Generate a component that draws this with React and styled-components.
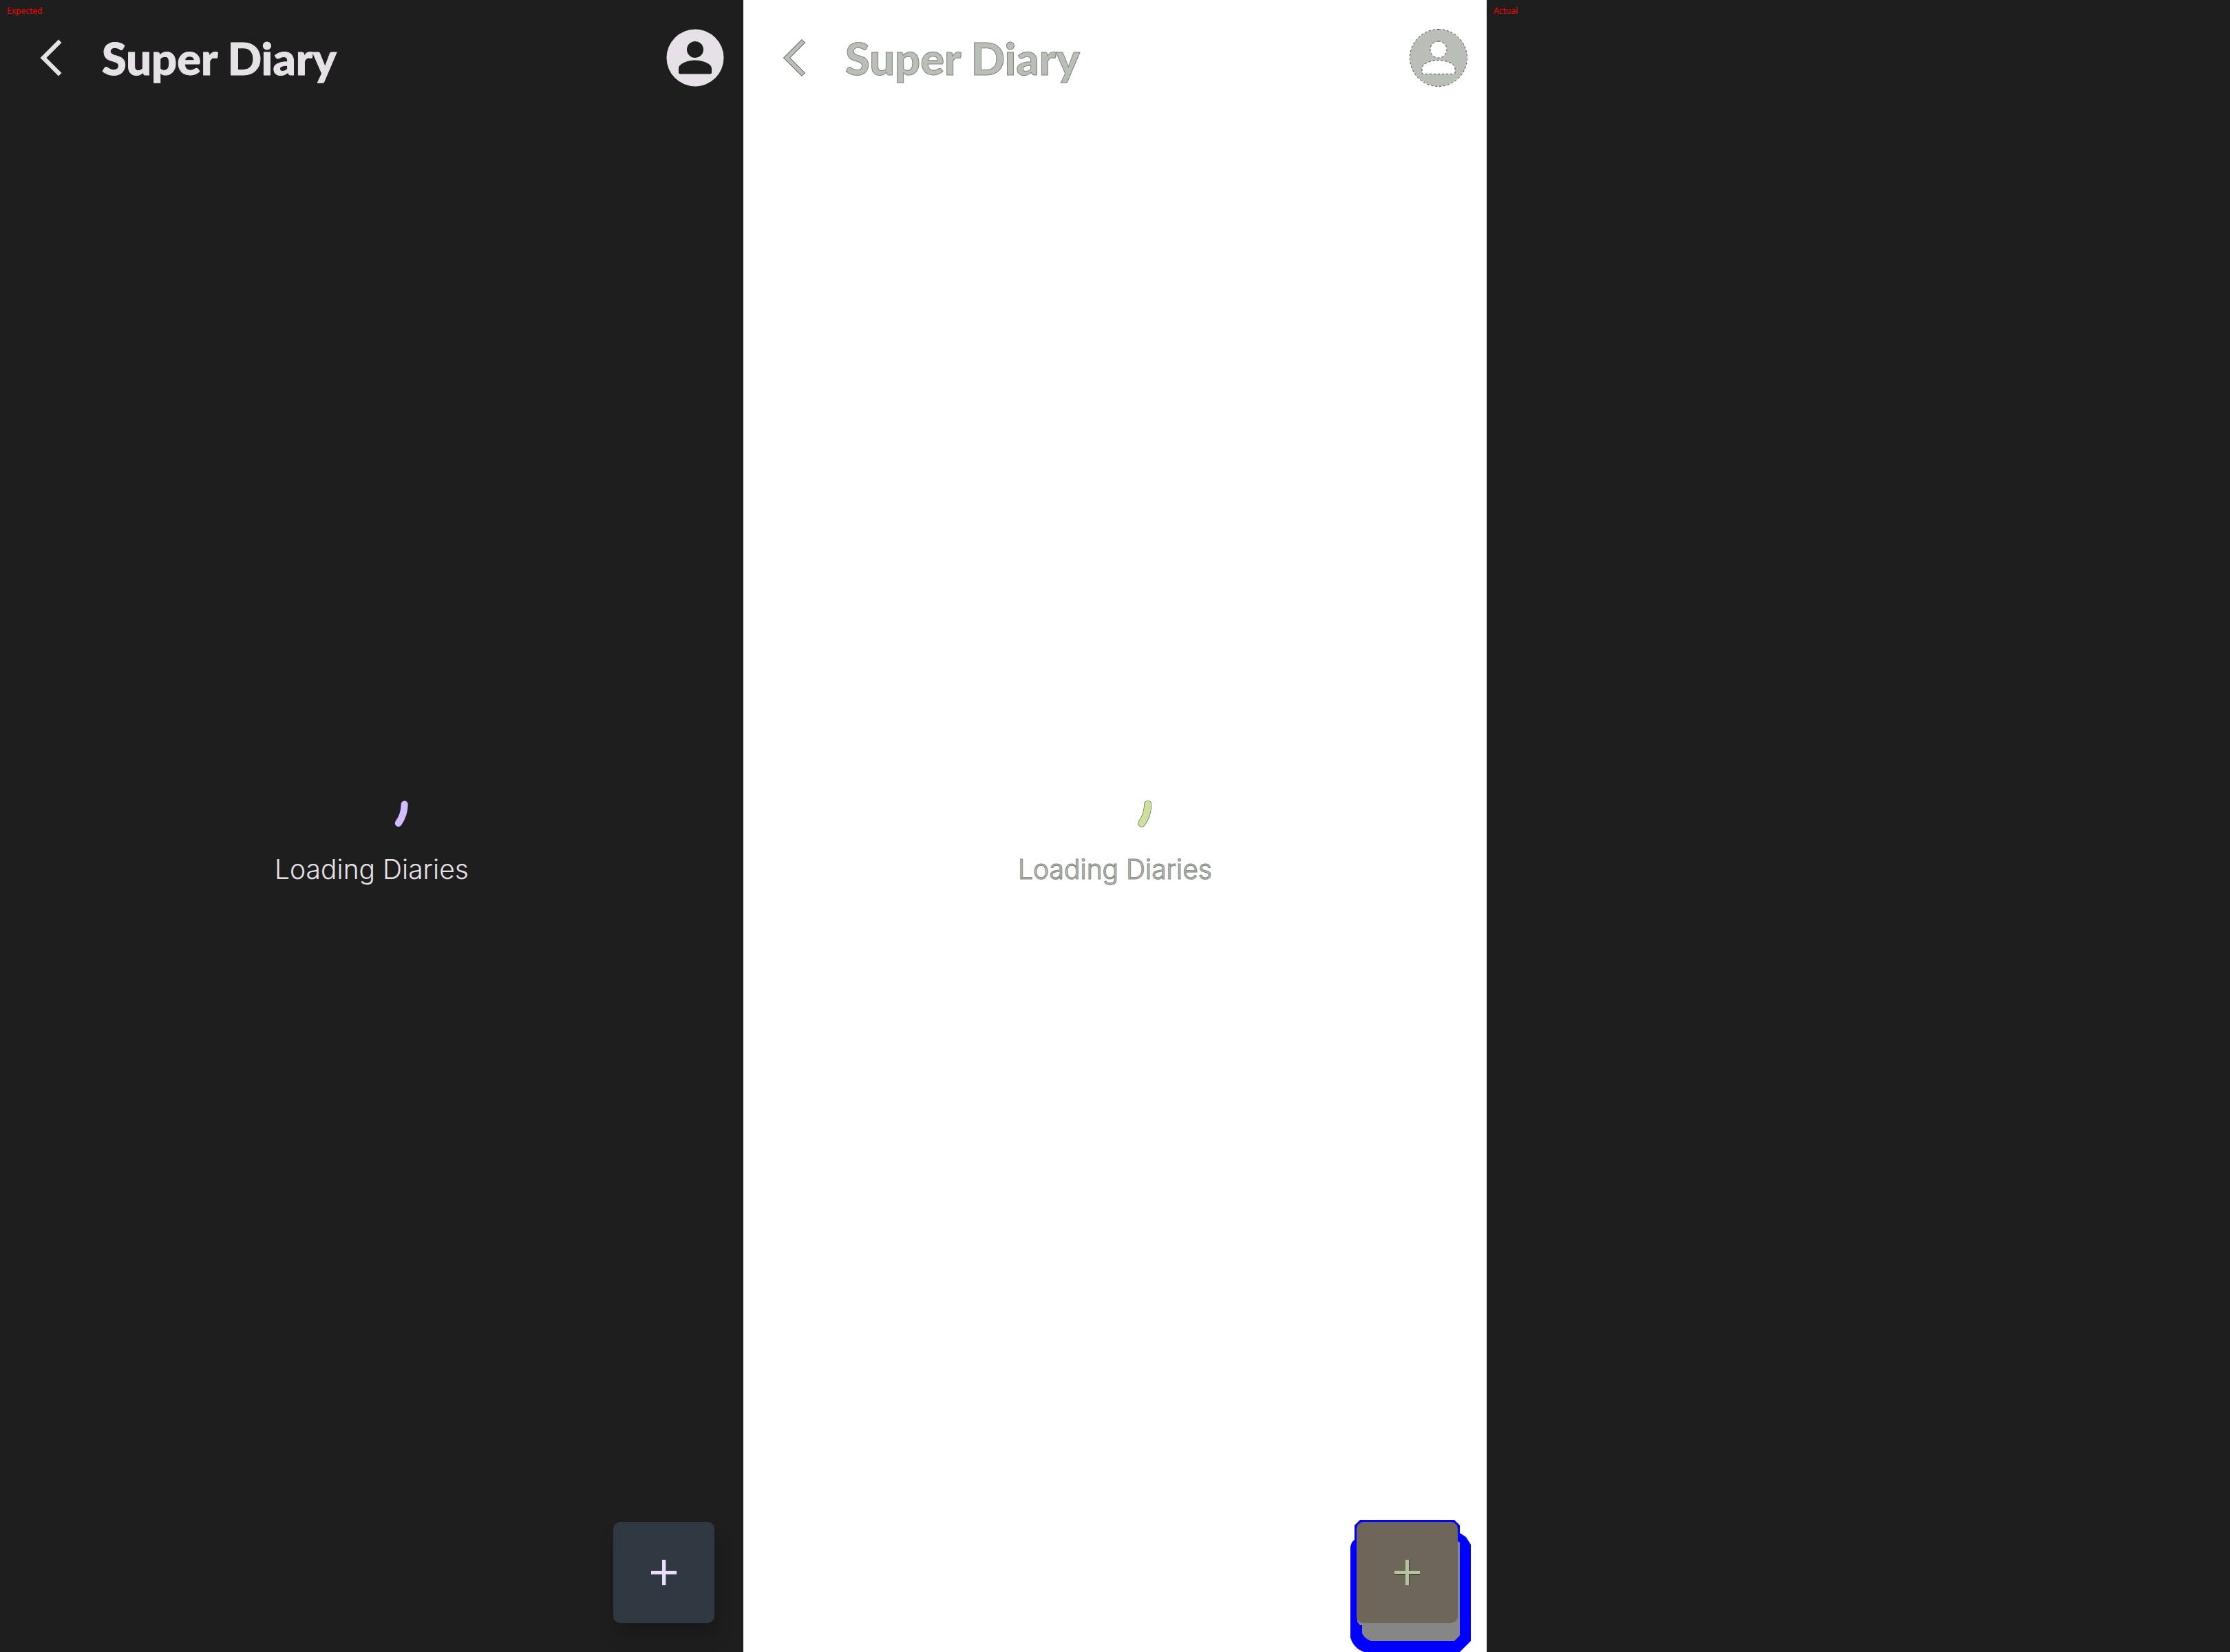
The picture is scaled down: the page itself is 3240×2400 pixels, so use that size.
import React from "react";
import styled, { createGlobalStyle } from "styled-components";

const GlobalStyle = createGlobalStyle`
  *, *::before, *::after { box-sizing: border-box; }
  body { margin: 0; background: #1e1e1e; }
`;

const themes = {
  dark: {
    background: "#1e1e1e",
    text: "#e6e1e7",
    titleEdge: "#e6e1e7",
    textEdge: "transparent",
    edge: "transparent",
    accent: "#d0bcff",
    fab: "#303841",
    plus: "#eaddff",
    plusEdge: "#6d6a7b",
    shadow: "4px 18px 24px rgba(0, 0, 0, 0.2)",
  },
  diff: {
    background: "#ffffff",
    text: "#b9beb6",
    titleEdge: "#80847e",
    textEdge: "#80847e",
    edge: "#3c3e3b",
    accent: "#cfe09c",
    fab: "#6f665a",
    plus: "#b4c3a0",
    plusEdge: "#3c3a28",
    shadow: "none",
  },
};

const Comparison = styled.main`
  display: grid;
  grid-template-columns: repeat(3, minmax(0, 1fr));
  min-height: 100vh;
`;

const Panel = styled.section`
  position: relative;
  display: grid;
  grid-template-rows: 189px 1fr 189px;
  overflow: hidden;
  background: ${(p) => p.$theme.background};
  color: ${(p) => p.$theme.text};
`;

const Tag = styled.span`
  position: absolute;
  top: 8px;
  left: 10px;
  color: #ff0000;
  font: 400 12px/16px "Noto Sans", sans-serif;
`;

const AppBar = styled.header`
  display: flex;
  align-items: center;
  gap: 28px;
  height: 168px;
  padding: 0 28px;
`;

const IconButton = styled.button`
  display: flex;
  align-items: center;
  justify-content: center;
  width: ${(p) => p.$width}px;
  height: 84px;
  padding: 0;
  border: 0;
  background: none;
  color: inherit;

  svg { display: block; }
`;

const Title = styled.h1`
  flex: 1;
  margin: 0;
  font: 900 65px/80px Lato, sans-serif;
  white-space: nowrap;
  -webkit-text-stroke: 1px ${(p) => p.$edge};
`;

const Loading = styled.div`
  display: flex;
  flex-direction: column;
  align-items: center;
  justify-content: center;
  gap: 20px;

  svg { display: block; }
`;

const Message = styled.p`
  margin: 0;
  font: 300 39px/44px Inter, sans-serif;
  -webkit-text-stroke: 1px ${(p) => p.$edge};
`;

const Actions = styled.footer`
  display: flex;
  justify-content: flex-end;
  align-items: flex-end;
  padding: 0 42px 42px;
`;

const FabSlot = styled.div`
  position: relative;
`;

const ShadowMap = styled.svg`
  position: absolute;
  top: -3px;
  left: -9px;
`;

const Fab = styled.button`
  position: relative;
  display: flex;
  align-items: center;
  justify-content: center;
  width: 147px;
  height: 147px;
  padding: 0;
  border: 0;
  border-radius: 10px;
  background: ${(p) => p.$theme.fab};
  box-shadow: ${(p) => p.$theme.shadow};
`;

function Screen({ theme, label, tag, showShadowMap }) {
  const outline = theme.edge;
  return (
    <Panel $theme={theme} aria-label={label}>
      {tag && <Tag>{tag}</Tag>}
      <AppBar>
        <IconButton type="button" $width={92} aria-label="Back">
          <svg width="32" height="54" viewBox="0 0 32 54" fill="currentColor" stroke={outline}>
            <path d="M27 .5 31.5 5 9.5 27l22 22-4.500 4.500L.5 27Z" />
          </svg>
        </IconButton>
        <Title $edge={theme.titleEdge}>Super Diary</Title>
        <IconButton type="button" $width={84} aria-label="Account">
          <svg width="84" height="84" viewBox="0 0 84 84">
            <path
              fill="currentColor"
              stroke={outline}
              strokeDasharray="3 3"
              fillRule="evenodd"
              d="M42 .5a41.500 41.500 0 1 1 0 83a41.500 41.500 0 1 1 0-83ZM42 18a12 12 0 1 0 0 24a12 12 0 1 0 0-24ZM18 63.500Q18 65.500 20 65.500H64Q66 65.500 66 63.500V57.500C66 50 52 45.500 42 45.500S18 50 18 57.500Z"
            />
          </svg>
        </IconButton>
      </AppBar>
      <Loading role="status">
        <svg width="105" height="105" viewBox="0 0 105 105" fill="none" strokeLinecap="round">
          <path d="M99.700 52.500A47.250 47.250 0 0 1 90.800 80" stroke={outline} strokeWidth="11" />
          <path d="M99.700 52.500A47.250 47.250 0 0 1 90.800 80" stroke={theme.accent} strokeWidth="10" />
        </svg>
        <Message $edge={theme.textEdge}>Loading Diaries</Message>
      </Loading>
      <Actions>
        <FabSlot>
          {showShadowMap && (
            <ShadowMap width="175" height="192" viewBox="0 0 175 192" aria-hidden="true">
              <path
                fill="#0000ff"
                d="M14 0H151L159 8V19L168 25 175 36V176L159 192H20Q5 187 0 171V39Q2 31 6 29V8Z"
              />
              <path fill="#868686" d="M150 31H156L159 33V168L151 176H30Q21 173 17 165V153H14L10 148V140H150Z" />
            </ShadowMap>
          )}
          <Fab type="button" $theme={theme} aria-label="Add diary">
            <svg width="37" height="37" viewBox="0 0 37 37">
              <path fill={theme.plusEdge} d="M16 0h6v37h-6ZM0 16h37v6H0Z" />
              <path fill={theme.plus} d="M16 0h5v37h-5ZM0 16h37v5H0Z" />
            </svg>
          </Fab>
        </FabSlot>
      </Actions>
    </Panel>
  );
}

export default function App() {
  return (
    <>
      <GlobalStyle />
      <Comparison>
        <Screen theme={themes.dark} label="Expected" tag="Expected" />
        <Screen theme={themes.diff} label="Difference" showShadowMap />
        <Panel $theme={themes.dark} aria-label="Actual">
          <Tag>Actual</Tag>
        </Panel>
      </Comparison>
    </>
  );
}
